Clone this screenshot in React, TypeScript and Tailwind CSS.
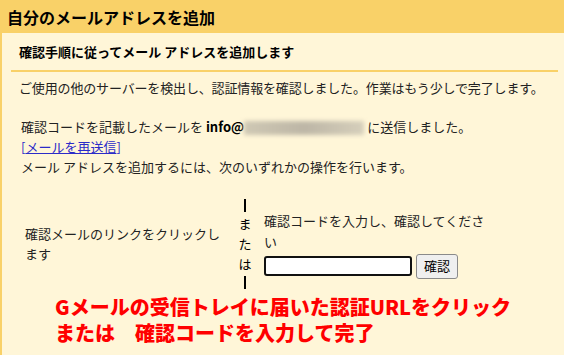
import React from 'react';

export default function App() {
  return <div className="relative w-[564px] h-[355px] overflow-hidden bg-[#fff6d8] font-['Noto_Sans_CJK_JP',sans-serif] text-[13px] text-[#222]">
      {/* Title bar */}
      <div className="h-[33px] bg-[#f9d168] pl-[7px] flex items-center text-[16px] font-bold text-black">
        自分のメールアドレスを追加
      </div>

      <div className="border-l-2 border-[#f9d168] h-[322px]">
        <div className="ml-[9px] mr-[6px] h-[39px] border-b-2 border-[#f9d168] pl-[8px] flex items-center font-bold text-black">
          確認手順に従ってメール アドレスを追加します
        </div>

        <p className="pl-[17px] mt-[6px] leading-[20px] tracking-[-0.15px]">
          ご使用の他のサーバーを検出し、認証情報を確認しました。作業はもう少しで完了します。
        </p>

        <div className="pl-[19px] mt-[19px] leading-[20px]">
          <div className="whitespace-nowrap">
            確認コードを記載したメールを <span className="font-bold text-black">info@</span>
            <span className="inline-block align-middle w-[120px] h-[14px] bg-gradient-to-r from-[#cfc8b4] via-[#bdb6a6] to-[#d6cfbb] blur-[2px]" />
            <span className="ml-[3px]">に送信しました。</span>
          </div>
          <div className="text-[#2b2bc8]">
            [<a href="#" className="underline">メールを再送信</a>]
          </div>
          <div>メール アドレスを追加するには、次のいずれかの操作を行います。</div>
        </div>

        {/* Two options */}
        <div className="flex items-center mt-[22px] pl-[23px]">
          <div className="w-[200px] leading-[20px]">確認メールのリンクをクリックします</div>
          <div className="w-[14px] ml-[13px] flex flex-col items-center leading-[20px] text-black">
            <span className="block w-[1.5px] h-[13px] bg-black mb-[2px]" />
            <span>ま</span>
            <span>た</span>
            <span>は</span>
            <span className="block w-[1.5px] h-[13px] bg-black mt-[2px]" />
          </div>
          <div className="ml-[12px] w-[225px]">
            <div className="leading-[21px]">確認コードを入力し、確認してください</div>
            <div className="flex items-center mt-[2px]">
              <input type="text" className="w-[148px] h-[20px] bg-white border-2 border-[#111] rounded-[3px] px-[2px] outline-none" />
              <button className="ml-[4px] w-[42px] h-[25px] bg-[#efefef] border border-[#8a8a8a] rounded-[3px] text-black text-[13px]">
                確認
              </button>
            </div>
          </div>
        </div>
      </div>

      {/* Annotation */}
      <div className="absolute left-[55px] top-[294px] text-[20px] font-black leading-[26px] text-[#ff0000] whitespace-nowrap">
        Gメールの受信トレイに届いた認証URLをクリック<br />
        または　確認コードを入力して完了
      </div>
    </div>;
}
